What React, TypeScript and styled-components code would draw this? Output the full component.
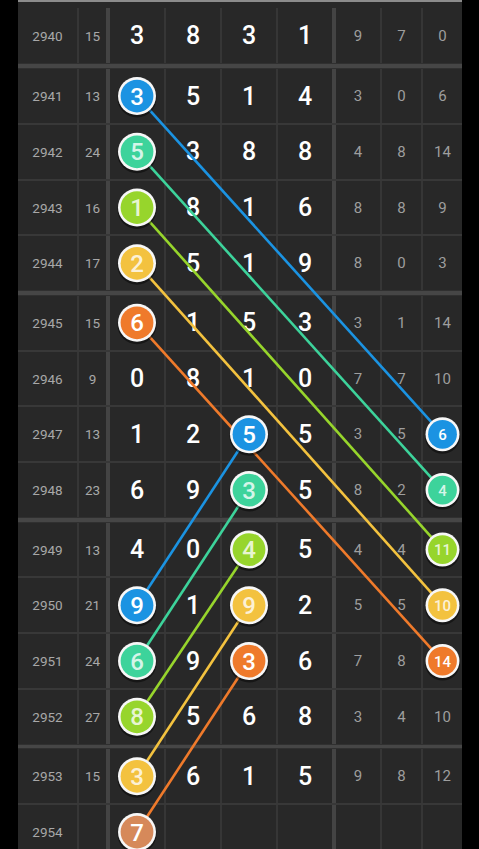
import React from 'react';
import styled, { createGlobalStyle } from 'styled-components';

const GlobalStyle = createGlobalStyle`
  html, body {
    margin: 0;
    padding: 0;
    background: #000;
    font-family: Roboto, "Liberation Sans", sans-serif;
  }
  #root {
    width: 479px;
    height: 849px;
    overflow: hidden;
  }
`;

// column widths include their right border
const COL_W = [61, 31, 56, 56, 56, 58, 46, 41, 39];
const COL_B = [2, 4, 2, 2, 2, 4, 2, 2, 0];
const LEFT = 18;
const TOP_LINE = 2;
const FIRST_H = 61.4;
const FIRST_PAD = 6;
const ROW_H = 53.75;
const THIN = 2;
const THICK = 5.75;

const ROWS: string[][] = [
  ['2940', '15', '3', '8', '3', '1', '9', '7', '0'],
  ['2941', '13', '3', '5', '1', '4', '3', '0', '6'],
  ['2942', '24', '5', '3', '8', '8', '4', '8', '14'],
  ['2943', '16', '1', '8', '1', '6', '8', '8', '9'],
  ['2944', '17', '2', '5', '1', '9', '8', '0', '3'],
  ['2945', '15', '6', '1', '5', '3', '3', '1', '14'],
  ['2946', '9', '0', '8', '1', '0', '7', '7', '10'],
  ['2947', '13', '1', '2', '5', '5', '3', '5', '6'],
  ['2948', '23', '6', '9', '3', '5', '8', '2', '4'],
  ['2949', '13', '4', '0', '4', '5', '4', '4', '11'],
  ['2950', '21', '9', '1', '9', '2', '5', '5', '10'],
  ['2951', '24', '6', '9', '3', '6', '7', '8', '14'],
  ['2952', '27', '8', '5', '6', '8', '3', '4', '10'],
  ['2953', '15', '3', '6', '1', '5', '9', '8', '12'],
  ['2954', '', '7', '', '', '', '', '', ''],
];

const isThick = (i: number) => i % 4 === 0;

const COLORS = ['#1b93e2', '#3dd39b', '#97d52c', '#f3c23f', '#ef7a2b'];

// geometry for the overlay
const colCenters: number[] = [];
{
  let x = LEFT;
  COL_W.forEach((w, i) => {
    colCenters.push(x + (w - COL_B[i]) / 2);
    x += w;
  });
}
const rowCenters: number[] = [];
{
  let y = TOP_LINE;
  ROWS.forEach((_, i) => {
    if (i === 0) {
      rowCenters.push(y + FIRST_PAD + (FIRST_H - FIRST_PAD) / 2);
      y += FIRST_H;
    } else {
      rowCenters.push(y + ROW_H / 2);
      y += ROW_H;
    }
    y += isThick(i) ? THICK : THIN;
  });
}

type Ball = { col: number; row: number; n: string; color: string; small?: boolean };

const groupA: Ball[] = ['3', '5', '1', '2', '6'].map((n, i) => ({ col: 2, row: 1 + i, n, color: COLORS[i] }));
const groupS: Ball[] = ['6', '4', '11', '10', '14'].map((n, i) => ({ col: 8, row: 7 + i, n, color: COLORS[i], small: true }));
const groupB: Ball[] = ['5', '3', '4', '9', '3'].map((n, i) => ({ col: 4, row: 7 + i, n, color: COLORS[i] }));
const groupC: Ball[] = ['9', '6', '8', '3', '7'].map((n, i) => ({
  col: 2,
  row: 10 + i,
  n,
  color: i === 4 ? '#d6895a' : COLORS[i],
}));

const balls = [...groupA, ...groupS, ...groupB, ...groupC];
const covered = new Set(balls.map((b) => `${b.row}-${b.col}`));

const links: [Ball, Ball][] = [
  ...groupA.map((b, i) => [b, groupS[i]] as [Ball, Ball]),
  ...groupB.map((b, i) => [b, groupC[i]] as [Ball, Ball]),
];

const Screen = styled.div`
  position: relative;
  width: 479px;
  height: 849px;
  background: #000;
  overflow: hidden;
`;

const Board = styled.div`
  margin-left: ${LEFT}px;
  width: 444px;
  display: flex;
  flex-direction: column;
  background: #282828;
`;

const TopLine = styled.div`
  height: ${TOP_LINE}px;
  background: #8c8c8c;
`;

const Row = styled.div<{ $h: number; $pad: number }>`
  display: flex;
  height: ${(p) => p.$h}px;
  padding-top: ${(p) => p.$pad}px;
  box-sizing: border-box;
`;

const Separator = styled.div<{ $thick: boolean }>`
  box-sizing: border-box;
  height: ${(p) => (p.$thick ? THICK : THIN)}px;
  background: ${(p) => (p.$thick ? '#464646' : '#383838')};
  border-top: ${(p) => (p.$thick ? '1px solid #303030' : 'none')};
  border-bottom: ${(p) => (p.$thick ? '1px solid #303030' : 'none')};
`;

const Cell = styled.div<{ $w: number; $b: number; $kind: 'period' | 'sum' | 'digit' | 'small' }>`
  width: ${(p) => p.$w}px;
  flex: none;
  box-sizing: border-box;
  border-right: ${(p) => p.$b}px solid ${(p) => (p.$b > 2 ? '#444444' : '#363636')};
  display: flex;
  align-items: center;
  justify-content: center;
  color: ${(p) => (p.$kind === 'digit' ? '#ffffff' : p.$kind === 'small' ? '#9e9e9e' : '#a8a8a8')};
  font-size: ${(p) => (p.$kind === 'digit' ? 25 : p.$kind === 'small' ? 15 : 13.5)}px;
  font-weight: ${(p) => (p.$kind === 'digit' ? 500 : 400)};
`;

const Overlay = styled.svg`
  position: absolute;
  left: 0;
  top: 0;
  pointer-events: none;
`;

const kindOf = (c: number) => (c === 0 ? 'period' : c === 1 ? 'sum' : c < 6 ? 'digit' : 'small');

const isLight = (color: string) => color === COLORS[2] || color === COLORS[3] || color === COLORS[1];

export default function App() {
  return (
    <>
      <GlobalStyle />
      <Screen>
        <Board>
          <TopLine />
          {ROWS.map((row, r) => (
            <React.Fragment key={row[0]}>
              <Row $h={r === 0 ? FIRST_H : ROW_H} $pad={r === 0 ? FIRST_PAD : 0}>
                {row.map((v, c) => (
                  <Cell key={c} $w={COL_W[c]} $b={COL_B[c]} $kind={kindOf(c)}>
                    {covered.has(`${r}-${c}`) ? '' : v}
                  </Cell>
                ))}
              </Row>
              {r < ROWS.length - 1 && <Separator $thick={isThick(r)} />}
            </React.Fragment>
          ))}
        </Board>
        <Overlay width={479} height={849} viewBox="0 0 479 849">
          {links.map(([a, b], i) => (
            <line
              key={i}
              x1={colCenters[a.col]}
              y1={rowCenters[a.row]}
              x2={colCenters[b.col]}
              y2={rowCenters[b.row]}
              stroke={a.color}
              strokeWidth={2.6}
            />
          ))}
          {balls.map((b, i) => {
            const cx = colCenters[b.col];
            const cy = rowCenters[b.row];
            const r = b.small ? 17 : 19;
            return (
              <g key={i}>
                <circle cx={cx} cy={cy + 2} r={r + 0.5} fill="rgba(0,0,0,0.45)" />
                <circle cx={cx} cy={cy} r={r} fill="#f7f7f7" />
                <circle cx={cx} cy={cy} r={r - 2.6} fill={b.color} />
                <text
                  x={cx}
                  y={cy + (b.small ? 5.5 : 8.5)}
                  textAnchor="middle"
                  fontFamily="Roboto, 'Liberation Sans', sans-serif"
                  fontSize={b.small ? 15 : 24}
                  fontWeight={500}
                  fill={isLight(b.color) ? 'rgba(255,255,255,0.8)' : '#ffffff'}
                >
                  {b.n}
                </text>
              </g>
            );
          })}
        </Overlay>
      </Screen>
    </>
  );
}
